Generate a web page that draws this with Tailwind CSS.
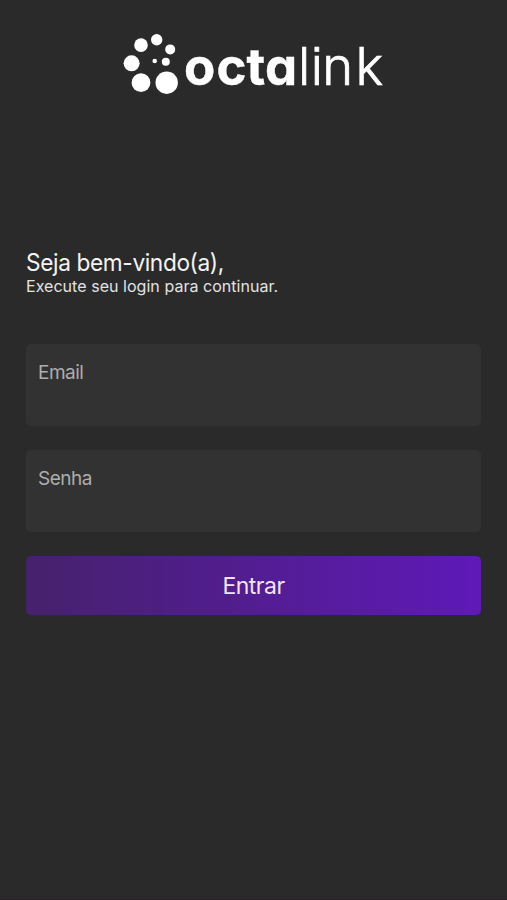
<!DOCTYPE html>
<html lang="pt-BR">
<head>
<meta charset="utf-8">
<meta name="viewport" content="width=device-width, initial-scale=1">
<title>octalink</title>
<script src="https://cdn.jsdelivr.net/npm/@tailwindcss/browser@4"></script>
</head>
<body class="bg-[#2a2a2a] font-[Inter,sans-serif] text-[#f2f2f2]">
<main class="flex h-[900px] w-full flex-col border-b border-[#2a1e26] px-[26px] pt-[30px]">
  <svg class="h-[70px] w-[270px] shrink-0 self-center" viewBox="119 30 270 70" fill="#fff" role="img" aria-label="octalink">
    <circle cx="156.7" cy="39.7" r="5.7"/>
    <circle cx="141" cy="45.1" r="6.8"/>
    <circle cx="170.2" cy="49.4" r="5"/>
    <circle cx="131.6" cy="63.3" r="8"/>
    <circle cx="165.8" cy="61.7" r="4"/>
    <circle cx="154.7" cy="61" r="2.3"/>
    <circle cx="141" cy="82.7" r="9.4"/>
    <circle cx="166.7" cy="82.7" r="11.2"/>
    <text class="[font-feature-settings:'cv11','ss07']" x="184 216.500 246.500 265" y="84.7" font-size="51" font-weight="700" stroke="#fff" stroke-width="0.4">octa</text>
    <text class="[font-feature-settings:'ss07']" x="298 310.800 322.300 355.500" y="84.7" font-size="52.500" font-weight="300" stroke="#fff" stroke-width="0.7">link</text>
  </svg>
  <h1 class="mt-[148px] origin-left scale-x-[0.945] text-[24px] leading-[30px] tracking-[-0.4px] whitespace-nowrap">Seja bem-vindo(a),</h1>
  <p class="-mt-px text-[16px] leading-[18px] tracking-[0.04px] text-[#e2e2e2]">Execute seu login para continuar.</p>
  <form class="mt-[49px] flex flex-col gap-6">
    <label class="h-[82px] rounded-[5px] bg-[#323232] px-3 pt-[17px] text-[19px] leading-[24px] tracking-[-0.5px] text-[#adadad]">Email</label>
    <label class="h-[82px] rounded-[5px] bg-[#323232] px-3 pt-[17px] text-[19px] leading-[24px] tracking-[-0.5px] text-[#adadad]">Senha</label>
    <button type="button" class="h-[59px] rounded-[5px] bg-linear-to-r/srgb from-[#46216c] to-[#5f19b8] pt-[2px] text-[23px] tracking-[-0.5px] text-[#f1e4fb]">Entrar</button>
  </form>
</main>
</body>
</html>
